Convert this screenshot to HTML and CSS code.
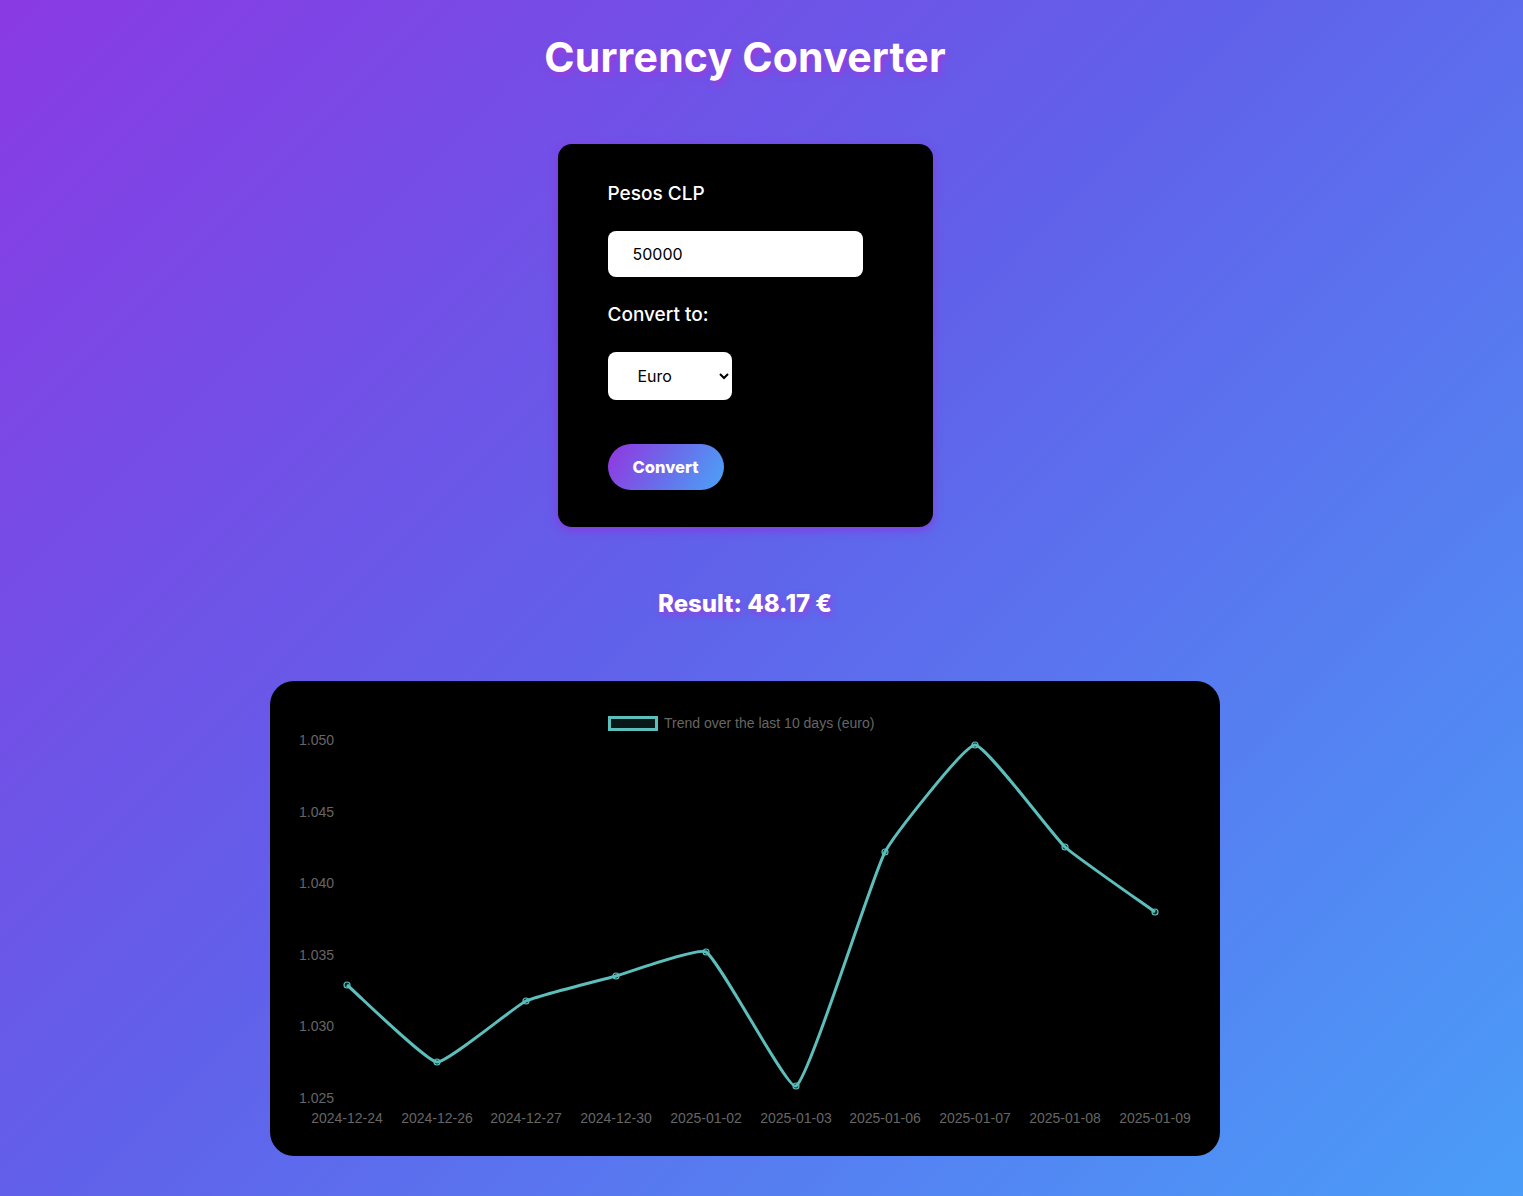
FILE: index.html
```html
<!DOCTYPE html>
<html lang="en">
<head>
<meta charset="utf-8">
<title>Currency Converter</title>
<link rel="stylesheet" href="styles.css">
</head>
<body>
<main class="page">
  <h1 class="title">Currency Converter</h1>

  <section class="converter">
    <label class="label" for="amount">Pesos CLP</label>
    <input class="amount" id="amount" type="text" value="50000">
    <label class="label" for="currency">Convert to:</label>
    <select class="currency" id="currency">
      <option>Euro</option>
      <option>Dólar</option>
    </select>
    <button class="convert-btn" type="button">Convert</button>
  </section>

  <p class="result">Result: 48.17 €</p>

  <section class="chart-card">
    <svg class="chart" width="950" height="475" viewBox="270 681 950 475">
      <g class="legend">
        <rect x="609.5" y="717.5" width="47" height="12" fill="rgba(75,192,192,0.12)" stroke="#5cbfbb" stroke-width="3"/>
        <text x="664" y="727.5">Trend over the last 10 days (euro)</text>
      </g>
      <g class="yticks">
        <text x="334" y="745">1.050</text>
        <text x="334" y="816.5">1.045</text>
        <text x="334" y="888">1.040</text>
        <text x="334" y="960">1.035</text>
        <text x="334" y="1031">1.030</text>
        <text x="334" y="1103">1.025</text>
      </g>
      <g class="xticks">
        <text x="347" y="1123">2024-12-24</text>
        <text x="437" y="1123">2024-12-26</text>
        <text x="526" y="1123">2024-12-27</text>
        <text x="616" y="1123">2024-12-30</text>
        <text x="706" y="1123">2025-01-02</text>
        <text x="796" y="1123">2025-01-03</text>
        <text x="885" y="1123">2025-01-06</text>
        <text x="975" y="1123">2025-01-07</text>
        <text x="1065" y="1123">2025-01-08</text>
        <text x="1155" y="1123">2025-01-09</text>
      </g>
      <path class="line" d="M347,985 C357.8,994.2 425.8,1061 437,1062 C447.2,1062.9 514.5,1006.5 526,1001 C536,996.2 605.2,978.9 616,976 C626.8,973.1 698.1,947.2 706,952 C719.7,960.4 787.6,1090.7 796,1086 C809.1,1078.7 871.3,878.2 885,852 C892.7,837.3 964.1,745.3 975,745 C985.7,744.7 1053.1,836 1065,847 C1074.7,856 1144.2,904.2 1155,912"/>
      <g class="points">
        <circle cx="347" cy="985" r="3"/>
        <circle cx="437" cy="1062" r="3"/>
        <circle cx="526" cy="1001" r="3"/>
        <circle cx="616" cy="976" r="3"/>
        <circle cx="706" cy="952" r="3"/>
        <circle cx="796" cy="1086" r="3"/>
        <circle cx="885" cy="852" r="3"/>
        <circle cx="975" cy="745" r="3"/>
        <circle cx="1065" cy="847" r="3"/>
        <circle cx="1155" cy="912" r="3"/>
      </g>
    </svg>
  </section>
</main>
</body>
</html>
```

FILE: styles.css
```css
* { box-sizing: border-box; }

html, body {
  margin: 0;
  padding: 0;
}

body {
  min-height: 1196px;
  background: linear-gradient(135deg, #8a3ae3 0%, #6160ea 45%, #4a9df8 100%);
  font-family: Inter, "Noto Sans", sans-serif;
  color: #fff;
}

.page {
  display: flex;
  flex-direction: column;
  align-items: center;
  padding: 33px 33px 40px 0;
}

.title {
  margin: 0;
  font-size: 41px;
  line-height: 48px;
  font-weight: 700;
  letter-spacing: 0.2px;
  text-shadow: 2px 3px 6px rgba(170, 50, 220, 0.85);
}

.converter {
  margin-top: 63px;
  width: 375px;
  background: #000;
  border-radius: 14px;
  padding: 38px 50px 37px;
  display: flex;
  flex-direction: column;
  align-items: flex-start;
  box-shadow: 0 3px 10px rgba(150, 40, 220, 0.7);
}

.label {
  font-size: 19px;
  line-height: 24px;
  font-weight: 500;
}

.amount {
  margin: 25px 0 26px;
  width: 255px;
  height: 46px;
  border: none;
  border-radius: 8px;
  padding: 0 25px;
  font-family: Inter, "Noto Sans", sans-serif;
  font-size: 16px;
  color: #000;
  outline: none;
}

.currency {
  margin-top: 25px;
  width: 124px;
  height: 48px;
  border: none;
  border-radius: 8px;
  padding: 0 8px 0 26px;
  font-family: Inter, "Noto Sans", sans-serif;
  font-size: 16px;
  color: #000;
  background: #fff;
}

.convert-btn {
  margin-top: 44px;
  width: 116px;
  height: 46px;
  border: none;
  border-radius: 23px;
  background: linear-gradient(120deg, #9336e0 0%, #6a6cea 50%, #4aa3f7 100%);
  color: #fff;
  font-family: Inter, "Noto Sans", sans-serif;
  font-size: 16.5px;
  font-weight: 800;
}

.result {
  margin: 63px 0 0;
  font-size: 24px;
  line-height: 28px;
  font-weight: 800;
  text-shadow: 2px 3px 6px rgba(170, 50, 220, 0.85);
}

.chart-card {
  margin-top: 63px;
  width: 950px;
  height: 475px;
  background: #000;
  border-radius: 24px;
  overflow: hidden;
}

.chart {
  display: block;
}

.chart text {
  font-family: "Liberation Sans", Arial, sans-serif;
  font-size: 14px;
  fill: #666;
}

.yticks text { text-anchor: end; }
.xticks text { text-anchor: middle; }

.line {
  fill: none;
  stroke: #5cbfbb;
  stroke-width: 3;
  stroke-linejoin: round;
}

.points circle {
  fill: rgba(75, 192, 192, 0.2);
  stroke: #5cbfbb;
  stroke-width: 1.2;
}
```
